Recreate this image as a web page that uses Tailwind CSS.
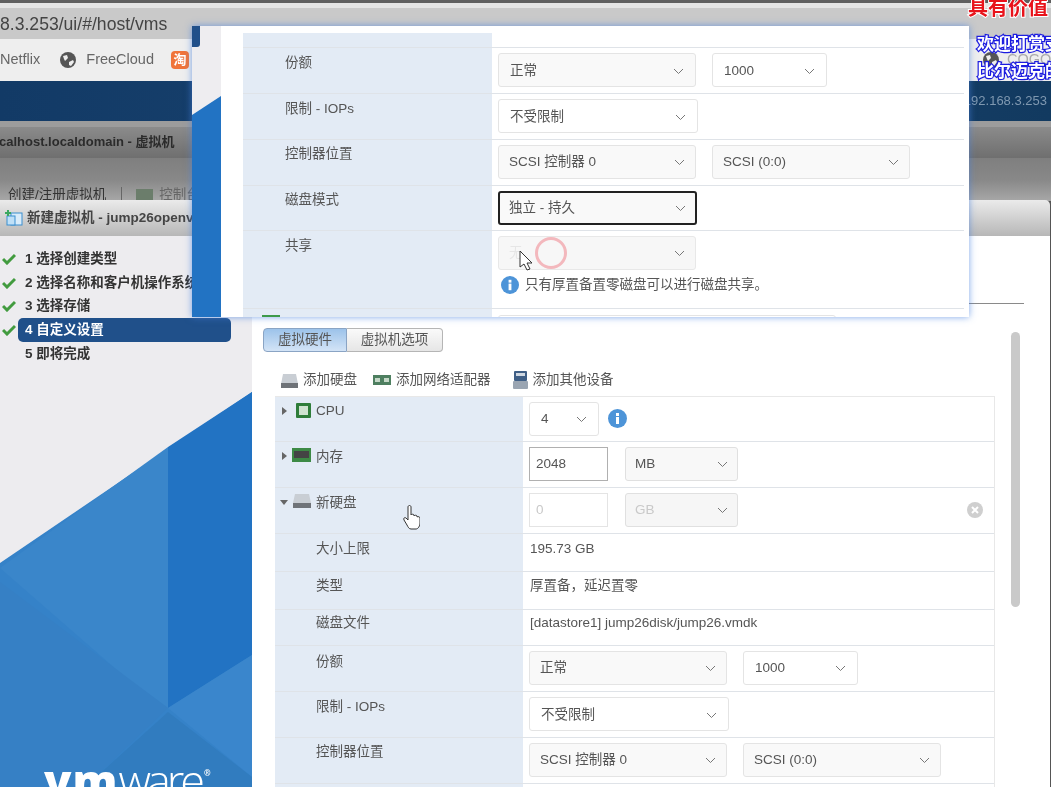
<!DOCTYPE html>
<html lang="en">
<head>
<meta charset="UTF-8">
<title>新建虚拟机</title>
<script src="https://cdn.jsdelivr.net/npm/@tailwindcss/browser@4"></script>
</head>
<body class="bg-white">
<div class="relative w-[1051px] h-[787px] overflow-hidden text-[13.5px] text-[#555] font-['Liberation_Sans','Noto_Sans_CJK_SC',sans-serif] blur-[0.35px]">

  <!-- browser behind -->
  <div class="flex flex-col h-full">
    <div class="h-[3px] bg-[#5f5f5f]"></div>
    <div class="h-[5px] bg-[#e4e4e4]"></div>
    <div class="h-[31px] bg-[#c9c9c9] text-[17.6px] leading-[33px] text-[#444] whitespace-nowrap">8.3.253/ui/#/host/vms</div>
    <div class="h-[42px] bg-[#eeeeee] flex items-center text-[14.5px] text-[#666] whitespace-nowrap">
      <span class="shrink-0">Netflix</span>
      <svg class="ml-[20px] w-[16px] h-[16px] shrink-0" viewBox="0 0 16 16"><circle cx="8" cy="8" r="8" fill="#555"/><path d="M3 4l4-1 1 3-3 3-1-2zM9 10l4-2 1 2-3 4-2-1z" fill="#eee"/></svg>
      <span class="ml-[10px] shrink-0">FreeCloud</span>
      <span class="ml-[17px] w-[18px] h-[18px] shrink-0 rounded-[4px] bg-[#f0743a] text-white text-[13px] leading-[18px] text-center font-bold">淘</span>
      <svg class="ml-[794px] w-[16px] h-[16px] shrink-0" viewBox="0 0 16 16"><circle cx="8" cy="8" r="8" fill="#555"/><path d="M3 4l4-1 1 3-3 3-1-2zM9 10l4-2 1 2-3 4-2-1z" fill="#eee"/></svg>
      <span class="ml-[8px] shrink-0 text-[#aaa]">COGO</span>
    </div>
    <div class="h-[40px] bg-gradient-to-r from-[#123a66] via-[#1a4470] to-[#123a60] flex items-center justify-end pr-[4px] text-[13px] text-[#7f98b0]">192.168.3.253</div>
    <div class="h-[6px] bg-[#9c9c9c]"></div>
    <div class="h-[31px] bg-gradient-to-b from-[#8b8b8b] to-[#6f6f6f] text-[13px] leading-[29px] font-bold text-[#2b2b2b] whitespace-nowrap -indent-[1px]">calhost.localdomain - 虚拟机</div>
    <div class="h-[43px] bg-gradient-to-b from-[#7f7f7f] via-[#888888] to-[#a8a8a8] flex items-end text-[13.5px] text-[#333] whitespace-nowrap overflow-hidden">
      <span class="pl-[8px] translate-y-[4px]">创建/注册虚拟机</span>
      <span class="ml-[15px] h-[14px] w-px bg-[#666]"></span>
      <span class="ml-[14px] w-[17px] h-[12px] bg-[#6b7d6b]"></span>
      <span class="ml-[6px] translate-y-[4px] text-[#666]">控制台</span>
    </div>
    <div class="flex-1 bg-[#555]"></div>
  </div>

  <!-- wizard dialog -->
  <div class="absolute left-0 top-[200px] w-[1050px] h-[587px] flex flex-col">
    <div class="h-[36px] shrink-0 rounded-tr-[5px] bg-gradient-to-b from-[#ebebeb] to-[#b7b7b7] flex items-center pl-[5px] text-[13.5px] font-bold text-[#444] whitespace-nowrap">
      <svg class="w-[18px] h-[18px]" viewBox="0 0 18 18"><rect x="6" y="4" width="11" height="12" fill="#d9ecfa" stroke="#3a8fd0"/><rect x="2" y="7" width="8" height="9" fill="#bfe0f7" stroke="#3a8fd0"/><path d="M3 1v6M0 4h6" stroke="#3aa860" stroke-width="2"/></svg>
      <span class="ml-[4px]">新建虚拟机 - jump26openv</span>
    </div>
    <div class="flex flex-1 min-h-0">
      <!-- steps -->
      <div class="relative w-[252px] shrink-0 bg-[#edecef] pt-[10px] text-[13.5px] font-bold text-[#333]">
        <svg class="absolute left-0 bottom-0 w-[252px] h-[395px]" viewBox="0 0 252 395">
          <path d="M0 171L252 0V395H0Z" fill="#3582c8"/>
          <path d="M168 55L252 0V263L168 316Z" fill="#2273c3"/>
          <path d="M0 176L168 55V316L125 285Z" fill="#3a86ca"/>
          <path d="M168 316L252 263V385Z" fill="#3a86cc"/>
          <path d="M0 190L168 316L85 395H0Z" fill="#3680c5"/>
          <path d="M85 395L168 320L252 385V395Z" fill="#317cbf"/>
        </svg>
        <div class="relative flex flex-col">
          <div class="flex items-center h-[24px] pt-[1px]">
            <svg class="ml-[2px] w-[14px] h-[12px]" viewBox="0 0 14 12"><path d="M1 6l4 4 8-8" fill="none" stroke="#429b3f" stroke-width="3"/></svg>
            <span class="ml-[9px] pt-[1px]">1 选择创建类型</span>
          </div>
          <div class="flex items-center h-[24px] pt-[1px]">
            <svg class="ml-[2px] w-[14px] h-[12px]" viewBox="0 0 14 12"><path d="M1 6l4 4 8-8" fill="none" stroke="#429b3f" stroke-width="3"/></svg>
            <span class="ml-[9px] pt-[1px] whitespace-nowrap">2 选择名称和客户机操作系统</span>
          </div>
          <div class="flex items-center h-[24px]">
            <svg class="ml-[2px] w-[14px] h-[12px]" viewBox="0 0 14 12"><path d="M1 6l4 4 8-8" fill="none" stroke="#429b3f" stroke-width="3"/></svg>
            <span class="ml-[9px]">3 选择存储</span>
          </div>
          <div class="flex items-center h-[24px]">
            <svg class="ml-[2px] w-[14px] h-[12px]" viewBox="0 0 14 12"><path d="M1 6l4 4 8-8" fill="none" stroke="#429b3f" stroke-width="3"/></svg>
            <span class="ml-[2px] w-[213px] h-[24px] pl-[7px] leading-[24px] rounded-[5px] bg-[#20508a] text-white">4 自定义设置</span>
          </div>
          <div class="h-[24px] leading-[24px] pl-[25px]">5 即将完成</div>
        </div>
        <div class="absolute left-[44px] top-[519px] text-[45px] leading-[50px] text-white font-['Open_Sans',sans-serif] whitespace-nowrap"><span class="font-extrabold tracking-[1px]">vm</span><span class="font-light tracking-[-4px]">ware</span><span class="ml-[3px] align-top text-[8px] leading-[36px]">®</span></div>
      </div>

      <!-- content pane -->
      <div class="relative flex-1 bg-white pt-[67px]">
        <div class="h-px w-[772px] bg-[#8a8a8a]"></div>
        <div class="absolute left-[759px] top-[96px] w-[9px] h-[275px] rounded-full bg-[#c9c9c9]"></div>

        <div class="ml-[11px] mt-[24px] flex w-[180px] h-[24px] text-[13.5px] leading-[22px] text-center text-[#555]">
          <div class="w-[84px] rounded-l-[4px] border border-[#8aa4c4] bg-gradient-to-b from-[#9cc3ea] to-[#d3e4f6]">虚拟硬件</div>
          <div class="flex-1 rounded-r-[4px] border border-l-0 border-[#b5b5b5] bg-gradient-to-b from-[#fafafa] to-[#e6e6e6]">虚拟机选项</div>
        </div>

        <div class="ml-[29px] mt-[18px] flex items-center h-[20px] whitespace-nowrap">
          <svg class="w-[17px] h-[15px]" viewBox="0 0 17 15"><path d="M2 1h13l2 10H0Z" fill="#c9ced4"/><rect y="10" width="17" height="5" fill="#6f7378"/></svg>
          <span class="ml-[5px]">添加硬盘</span>
          <svg class="ml-[16px] w-[18px] h-[10px]" viewBox="0 0 18 10"><rect width="18" height="10" fill="#4e7f60"/><rect x="2" y="3" width="5" height="4" fill="#c5d8c8"/><rect x="11" y="3" width="5" height="4" fill="#c5d8c8"/></svg>
          <span class="ml-[5px]">添加网络适配器</span>
          <svg class="ml-[22px] w-[15px] h-[18px]" viewBox="0 0 15 18"><rect x="1" width="13" height="10" rx="1" fill="#3f5f86"/><rect x="3" y="2" width="9" height="3" fill="#cfd8e2"/><rect y="10" width="15" height="8" rx="1" fill="#9aa5b2"/></svg>
          <span class="ml-[5px]">添加其他设备</span>
        </div>

        <!-- hardware table -->
        <div class="ml-[23px] mt-[6px] w-[720px] border-t border-r border-[#e8e8e8] text-[13.5px] text-[#555]">
          <div class="flex h-[45px] border-b border-[#dfe3e8]">
            <div class="w-[248px] bg-[#e3ebf5] flex items-start pt-[6px] pl-[7px]">
              <span class="mt-[4px] w-0 h-0 border-y-[4px] border-y-transparent border-l-[5px] border-l-[#666]"></span>
              <svg class="ml-[9px] w-[15px] h-[15px]" viewBox="0 0 15 15"><rect width="15" height="15" rx="1" fill="#2f7d3a"/><rect x="3" y="3" width="9" height="9" fill="#cfe3d0"/></svg>
              <span class="ml-[5px] leading-[15px]">CPU</span>
            </div>
            <div class="flex-1 flex items-start pt-[5px] pl-[6px]">
              <div class="w-[70px] h-[34px] flex items-center justify-between px-[11px] rounded-[3px] border border-[#e4e4e4] bg-white">4
                <svg class="w-[11px] h-[7px]" viewBox="0 0 11 7"><path d="M1 1l4.500 4.500L10 1" fill="none" stroke="#777"/></svg></div>
              <svg class="ml-[9px] mt-[7px] w-[19px] h-[19px]" viewBox="0 0 19 19"><circle cx="9.500" cy="9.500" r="9.500" fill="#4d94d8"/><rect x="8" y="8" width="3" height="7" fill="#fff"/><rect x="8" y="4" width="3" height="3" fill="#fff"/></svg>
            </div>
          </div>
          <div class="flex h-[46px] border-b border-[#dfe3e8]">
            <div class="w-[248px] bg-[#e3ebf5] flex items-start pt-[6px] pl-[7px]">
              <span class="mt-[4px] w-0 h-0 border-y-[4px] border-y-transparent border-l-[5px] border-l-[#666]"></span>
              <svg class="ml-[5px] w-[19px] h-[14px]" viewBox="0 0 19 14"><rect width="19" height="14" fill="#3d8a45"/><rect x="2" y="3" width="15" height="7" fill="#444"/></svg>
              <span class="ml-[5px] mt-[1px] leading-[15px]">内存</span>
            </div>
            <div class="flex-1 flex items-start pt-[5px] pl-[6px]">
              <div class="w-[79px] h-[34px] flex items-center px-[6px] border border-[#b0b0b0]">2048</div>
              <div class="ml-[17px] w-[113px] h-[34px] flex items-center justify-between px-[9px] rounded-[3px] border border-[#e0e0e0] bg-[#f8f8f8]">MB
                <svg class="w-[11px] h-[7px]" viewBox="0 0 11 7"><path d="M1 1l4.500 4.500L10 1" fill="none" stroke="#777"/></svg></div>
            </div>
          </div>
          <div class="relative flex h-[46px] border-b border-[#dfe3e8]">
            <div class="w-[248px] bg-[#e3ebf5] flex items-start pt-[6px] pl-[5px]">
              <span class="mt-[6px] w-0 h-0 border-x-[4px] border-x-transparent border-t-[5px] border-t-[#666]"></span>
              <svg class="ml-[5px] w-[18px] h-[14px]" viewBox="0 0 18 14"><path d="M2 0h14l2 9H0Z" fill="#c9ced4"/><rect y="9" width="18" height="5" fill="#6f7378"/></svg>
              <span class="ml-[5px] mt-[1px] leading-[15px]">新硬盘</span>
            </div>
            <div class="flex-1 flex items-start pt-[5px] pl-[6px] text-[#c9c9c9]">
              <div class="w-[79px] h-[34px] flex items-center px-[6px] border border-[#e4e4e4]">0</div>
              <div class="ml-[17px] w-[113px] h-[34px] flex items-center justify-between px-[9px] rounded-[3px] border border-[#e0e0e0] bg-[#f6f6f6]">GB
                <svg class="w-[11px] h-[7px]" viewBox="0 0 11 7"><path d="M1 1l4.500 4.500L10 1" fill="none" stroke="#777"/></svg></div>
            </div>
            <svg class="absolute left-[692px] top-[14px] w-[16px] h-[16px]" viewBox="0 0 16 16"><circle cx="8" cy="8" r="8" fill="#cfcfcf"/><path d="M5 5l6 6M11 5l-6 6" stroke="#fff" stroke-width="2"/></svg>
          </div>
          <div class="flex h-[38px] border-b border-[#dfe3e8]">
            <div class="w-[248px] bg-[#e3ebf5] pl-[41px] pt-[5px]">大小上限</div>
            <div class="flex-1 pl-[7px] pt-[5px]">195.73 GB</div>
          </div>
          <div class="flex h-[38px] border-b border-[#dfe3e8]">
            <div class="w-[248px] bg-[#e3ebf5] pl-[41px] pt-[4px]">类型</div>
            <div class="flex-1 pl-[7px] pt-[4px]">厚置备，延迟置零</div>
          </div>
          <div class="flex h-[36px] border-b border-[#dfe3e8]">
            <div class="w-[248px] bg-[#e3ebf5] pl-[41px] pt-[3px]">磁盘文件</div>
            <div class="flex-1 pl-[7px] pt-[3px]">[datastore1] jump26disk/jump26.vmdk</div>
          </div>
          <div class="flex h-[46px] border-b border-[#dfe3e8]">
            <div class="w-[248px] bg-[#e3ebf5] pl-[41px] pt-[6px]">份额</div>
            <div class="flex-1 flex items-start pt-[5px] pl-[6px]">
              <div class="w-[198px] h-[34px] flex items-center justify-between px-[10px] rounded-[3px] border border-[#e4e4e4] bg-[#f9f9f9]">正常
                <svg class="w-[11px] h-[7px]" viewBox="0 0 11 7"><path d="M1 1l4.500 4.500L10 1" fill="none" stroke="#777"/></svg></div>
              <div class="ml-[16px] w-[115px] h-[34px] flex items-center justify-between px-[11px] rounded-[3px] border border-[#e4e4e4] bg-white">1000
                <svg class="w-[11px] h-[7px]" viewBox="0 0 11 7"><path d="M1 1l4.500 4.500L10 1" fill="none" stroke="#777"/></svg></div>
            </div>
          </div>
          <div class="flex h-[46px] border-b border-[#dfe3e8]">
            <div class="w-[248px] bg-[#e3ebf5] pl-[41px] pt-[5px]">限制 - IOPs</div>
            <div class="flex-1 flex items-start pt-[5px] pl-[6px]">
              <div class="w-[200px] h-[34px] flex items-center justify-between px-[11px] pt-[2px] rounded-[3px] border border-[#e4e4e4] bg-white">不受限制
                <svg class="w-[11px] h-[7px]" viewBox="0 0 11 7"><path d="M1 1l4.500 4.500L10 1" fill="none" stroke="#777"/></svg></div>
            </div>
          </div>
          <div class="flex h-[46px] border-b border-[#dfe3e8]">
            <div class="w-[248px] bg-[#e3ebf5] pl-[41px] pt-[4px]">控制器位置</div>
            <div class="flex-1 flex items-start pt-[5px] pl-[6px]">
              <div class="w-[198px] h-[34px] flex items-center justify-between px-[10px] rounded-[3px] border border-[#e4e4e4] bg-[#f9f9f9]">SCSI 控制器 0
                <svg class="w-[11px] h-[7px]" viewBox="0 0 11 7"><path d="M1 1l4.500 4.500L10 1" fill="none" stroke="#777"/></svg></div>
              <div class="ml-[16px] w-[198px] h-[34px] flex items-center justify-between px-[10px] rounded-[3px] border border-[#e4e4e4] bg-[#f9f9f9]">SCSI (0:0)
                <svg class="w-[11px] h-[7px]" viewBox="0 0 11 7"><path d="M1 1l4.500 4.500L10 1" fill="none" stroke="#777"/></svg></div>
            </div>
          </div>
          <div class="h-[20px] w-[248px] bg-[#e3ebf5]"></div>
        </div>

        <!-- hand cursor -->
        <svg class="absolute left-[151px] top-[269px] w-[17px] h-[25px]" viewBox="0 0 17 25"><path d="M5 2c0-2 3-2 3 0v8c0-1 3-1 3 0v1c0-1 3-1 3 0v1c1-1 3 0 3 1v5c0 3-2 6-4 6H8c-2 0-3-2-4-4l-3-5c-1-2 1-3 2-2l2 2Z" fill="#fff" stroke="#333"/></svg>
      </div>
    </div>
  </div>

  <!-- picture in picture -->
  <div class="absolute left-[192px] top-[26px] w-[777px] h-[291px] flex overflow-hidden bg-white shadow-[0_0_7px_rgba(70,130,225,0.7)]">
    <div class="relative w-[29px] shrink-0 bg-[#eeedf0]">
      <div class="absolute left-0 top-0 w-[8px] h-[21px] bg-[#21508a] rounded-br-[3px]"></div>
      <svg class="absolute left-0 top-[70px] w-[29px] h-[221px]" viewBox="0 0 29 221"><path d="M0 19L29 0V221H0Z" fill="#2273c3"/></svg>
    </div>
    <div class="flex-1 pl-[22px] pr-[5px] pt-[7px] text-[13.5px] text-[#555]">
      <div class="flex h-[15px] border-b border-[#dfe3e8]">
        <div class="w-[249px] bg-[#e3ebf5]"></div>
      </div>
      <div class="flex h-[46px] border-b border-[#dfe3e8]">
        <div class="w-[249px] bg-[#e3ebf5] pl-[42px] pt-[5px]">份额</div>
        <div class="flex-1 flex items-start pt-[5px] pl-[6px]">
          <div class="w-[198px] h-[34px] flex items-center justify-between px-[11px] pt-[2px] rounded-[3px] border border-[#e4e4e4] bg-[#f9f9f9]">正常
            <svg class="w-[11px] h-[7px]" viewBox="0 0 11 7"><path d="M1 1l4.500 4.500L10 1" fill="none" stroke="#777"/></svg></div>
          <div class="ml-[16px] w-[115px] h-[34px] flex items-center justify-between px-[11px] pt-[2px] rounded-[3px] border border-[#e4e4e4] bg-white">1000
            <svg class="w-[11px] h-[7px]" viewBox="0 0 11 7"><path d="M1 1l4.500 4.500L10 1" fill="none" stroke="#777"/></svg></div>
        </div>
      </div>
      <div class="flex h-[46px] border-b border-[#dfe3e8]">
        <div class="w-[249px] bg-[#e3ebf5] pl-[42px] pt-[5px]">限制 - IOPs</div>
        <div class="flex-1 flex items-start pt-[5px] pl-[6px]">
          <div class="w-[200px] h-[34px] flex items-center justify-between px-[11px] pt-[2px] rounded-[3px] border border-[#e4e4e4] bg-white">不受限制
            <svg class="w-[11px] h-[7px]" viewBox="0 0 11 7"><path d="M1 1l4.500 4.500L10 1" fill="none" stroke="#777"/></svg></div>
        </div>
      </div>
      <div class="flex h-[46px] border-b border-[#dfe3e8]">
        <div class="w-[249px] bg-[#e3ebf5] pl-[42px] pt-[4px]">控制器位置</div>
        <div class="flex-1 flex items-start pt-[5px] pl-[6px]">
          <div class="w-[198px] h-[34px] flex items-center justify-between px-[10px] rounded-[3px] border border-[#e4e4e4] bg-[#f9f9f9]">SCSI 控制器 0
            <svg class="w-[11px] h-[7px]" viewBox="0 0 11 7"><path d="M1 1l4.500 4.500L10 1" fill="none" stroke="#777"/></svg></div>
          <div class="ml-[16px] w-[198px] h-[34px] flex items-center justify-between px-[10px] rounded-[3px] border border-[#e4e4e4] bg-[#f9f9f9]">SCSI (0:0)
            <svg class="w-[11px] h-[7px]" viewBox="0 0 11 7"><path d="M1 1l4.500 4.500L10 1" fill="none" stroke="#777"/></svg></div>
        </div>
      </div>
      <div class="flex h-[45px] border-b border-[#dfe3e8]">
        <div class="w-[249px] bg-[#e3ebf5] pl-[42px] pt-[4px]">磁盘模式</div>
        <div class="flex-1 flex items-start pt-[5px] pl-[6px]">
          <div class="w-[199px] h-[34px] flex items-center justify-between px-[9px] rounded-[3px] border-2 border-[#222] bg-[#f9f9f9]">独立 - 持久
            <svg class="w-[11px] h-[7px]" viewBox="0 0 11 7"><path d="M1 1l4.500 4.500L10 1" fill="none" stroke="#777"/></svg></div>
        </div>
      </div>
      <div class="flex h-[78px] border-b border-[#dfe3e8]">
        <div class="w-[249px] bg-[#e3ebf5] pl-[42px] pt-[5px]">共享</div>
        <div class="flex-1 pt-[5px] pl-[6px]">
          <div class="relative w-[198px] h-[34px] flex items-center justify-between px-[10px] rounded-[3px] border border-[#e8e8e8] bg-[#f7f7f7]">
            <span class="text-[#e6e6e6]">无</span>
            <svg class="w-[11px] h-[7px]" viewBox="0 0 11 7"><path d="M1 1l4.500 4.500L10 1" fill="none" stroke="#777"/></svg>
            <span class="absolute left-[36px] top-0 w-[32px] h-[32px] rounded-full border-[3px] border-[#f3b8bd]"></span>
            <svg class="absolute left-[20px] top-[13px] w-[15px] h-[21px]" viewBox="0 0 15 21"><path d="M1 1v16l4-3 3 6 3-1-3-6h5Z" fill="#fff" stroke="#333"/></svg>
          </div>
          <div class="mt-[6px] ml-[3px] flex items-center h-[18px] whitespace-nowrap">
            <svg class="w-[18px] h-[18px]" viewBox="0 0 19 19"><circle cx="9.500" cy="9.500" r="9.500" fill="#4d94d8"/><rect x="8" y="8" width="3" height="7" fill="#fff"/><rect x="8" y="4" width="3" height="3" fill="#fff"/></svg>
            <span class="ml-[6px]">只有厚置备置零磁盘可以进行磁盘共享。</span>
          </div>
        </div>
      </div>
      <div class="flex h-[20px]">
        <div class="w-[249px] bg-[#e3ebf5] pl-[19px] pt-[6px]"><div class="w-[18px] h-[12px] bg-[#3d9a4a]"></div></div>
        <div class="ml-[6px] mt-[6px] w-[338px] h-[20px] rounded-[3px] border border-[#e4e4e4]"></div>
      </div>
    </div>
  </div>

  <!-- video captions -->
  <div class="absolute left-[968px] top-[-3px] text-[20px] leading-[22px] font-bold text-[#e8131b] whitespace-nowrap [-webkit-text-stroke:2px_#fff] [paint-order:stroke_fill]">具有价值</div>
  <div class="absolute left-[977px] top-[35px] text-[17px] leading-[20px] font-bold text-white whitespace-nowrap [-webkit-text-stroke:2.500px_#1c1ce0] [paint-order:stroke_fill]">欢迎打赏支</div>
  <div class="absolute left-[977px] top-[62px] text-[17px] leading-[20px] font-bold text-white whitespace-nowrap [-webkit-text-stroke:2.500px_#1c1ce0] [paint-order:stroke_fill]">比尔迈克的</div>
</div>
</body>
</html>
